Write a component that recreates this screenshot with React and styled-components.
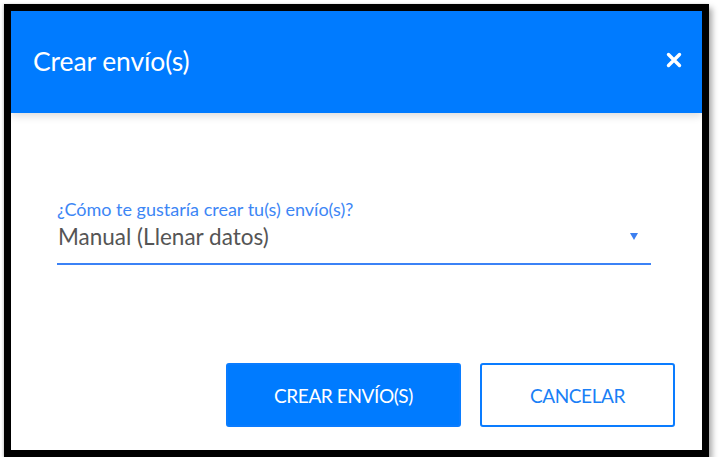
import styled, { createGlobalStyle } from 'styled-components'

const GlobalStyle = createGlobalStyle`
    html, body {
        margin: 0;
        padding: 0;
        background: #ffffff;
        font-family: Lato, "Open Sans", sans-serif;
    }
`

const App = () => {
    return (
        <>
            <GlobalStyle />
            <Frame>
                <DialogHeader>
                    <Title>Crear envío(s)</Title>
                    <CloseButton aria-label="Cerrar">
                        <svg width="16" height="16" viewBox="0 0 16 16">
                            <path d="M2.5 2.5 L13.5 13.5 M13.5 2.5 L2.5 13.5" stroke="#fff" strokeWidth="3.4" strokeLinecap="round" />
                        </svg>
                    </CloseButton>
                </DialogHeader>

                <DialogBody>
                    <Field>
                        <Label>¿Cómo te gustaría crear tu(s) envío(s)?</Label>
                        <SelectRow>
                            <Value>Manual (Llenar datos)</Value>
                            <Caret />
                        </SelectRow>
                    </Field>

                    <Actions>
                        <Button primary>CREAR ENVÍO(S)</Button>
                        <Button>CANCELAR</Button>
                    </Actions>
                </DialogBody>
            </Frame>
        </>
    )
}

export default App

const Frame = styled.div`
    margin: 4px 0 0 4px;
    width: 691px;
    height: 439px;
    border: 7px solid #000;
    background: #fff;
    display: flex;
    flex-direction: column;
    box-shadow: 3px 4px 6px rgba(0, 0, 0, 0.35), -1px 0 2px rgba(0, 0, 0, 0.15);
`

const DialogHeader = styled.div`
    position: relative;
    height: 102px;
    flex-shrink: 0;
    background: #007bff;
    display: flex;
    align-items: center;
    justify-content: space-between;
    padding: 0 20px 0 22px;
    box-shadow: 0 3px 8px rgba(0, 0, 0, 0.14);
    z-index: 1;
`

const Title = styled.h1`
    margin: 0;
    color: #fff;
    font-size: 26.5px;
    font-weight: 400;
    letter-spacing: -0.1px;
    padding-bottom: 2px;
`

const CloseButton = styled.button`
    border: none;
    background: transparent;
    padding: 0;
    width: 16px;
    height: 16px;
    display: flex;
    cursor: pointer;
    margin-bottom: 4px;
`

const DialogBody = styled.div`
    flex: 1;
    display: flex;
    flex-direction: column;
    justify-content: space-between;
    padding: 86px 27px 23px 46px;
`

const Field = styled.div`
    display: flex;
    flex-direction: column;
    margin-right: 24px;
`

const Label = styled.label`
    color: #3d86f5;
    font-size: 18px;
    line-height: 20px;
    white-space: nowrap;
`

const SelectRow = styled.div`
    display: flex;
    align-items: flex-start;
    justify-content: space-between;
    height: 44px;
    border-bottom: 2px solid #3b82f6;
    padding: 0 13px 0 1px;
`

const Value = styled.span`
    color: #555;
    font-size: 22.5px;
    line-height: 27px;
    padding-top: 4px;
`

const Caret = styled.span`
    width: 0;
    height: 0;
    border-left: 4.5px solid transparent;
    border-right: 4.5px solid transparent;
    border-top: 7px solid #3b7ff0;
    margin-top: 14px;
`

const Actions = styled.div`
    display: flex;
    justify-content: flex-end;
    gap: 19px;
`

const Button = styled.button`
    height: 64px;
    width: ${p => (p.primary ? '235px' : '195px')};
    border-radius: 3px;
    border: 2px solid #0a7cff;
    background: ${p => (p.primary ? '#007bff' : '#fff')};
    color: ${p => (p.primary ? '#fff' : '#1a7ff6')};
    font-family: Lato, "Open Sans", sans-serif;
    font-size: 19px;
    letter-spacing: -0.4px;
    cursor: pointer;
`
